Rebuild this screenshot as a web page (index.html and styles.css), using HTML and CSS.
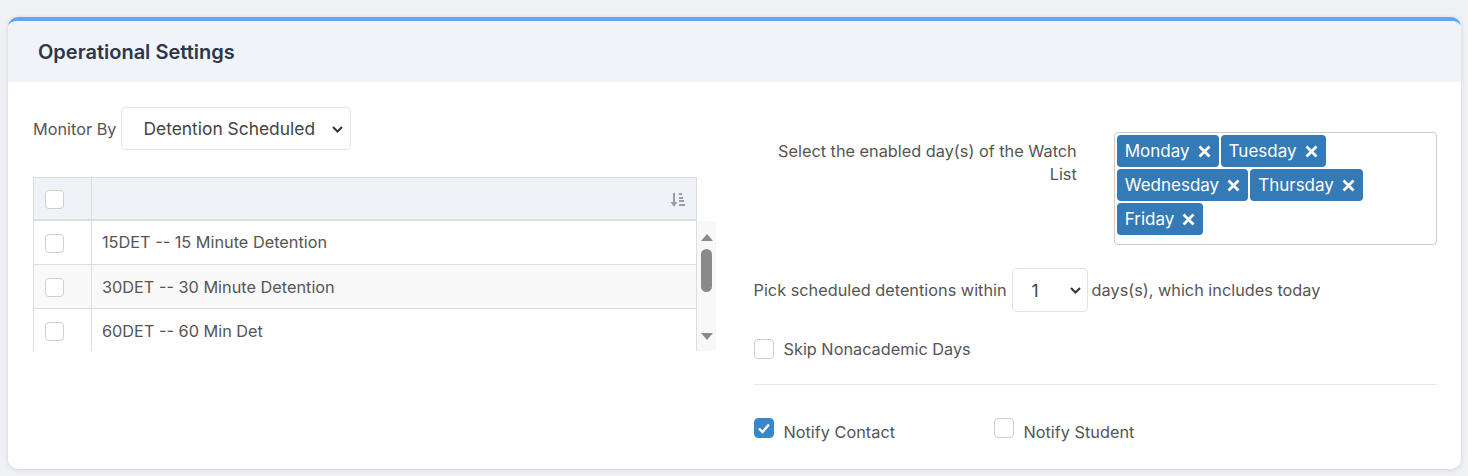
FILE: index.html
```html
<!DOCTYPE html>
<html lang="en">
<head>
    <meta charset="UTF-8">
    <meta name="viewport" content="width=device-width, initial-scale=1.0">
    <title>Watch List - Operational Settings</title>
    <link rel="stylesheet" href="styles.css">
</head>
<body>
    <div class="page">
        <section class="card">
            <header class="card-head">
                <h2>Operational Settings</h2>
            </header>

            <div class="card-body">
                <div class="col-left">
                    <div class="monitor-row">
                        <label for="monitorBy">Monitor By</label>
                        <div class="select-wrap select-wide">
                            <select id="monitorBy">
                                <option>Detention Scheduled</option>
                                <option>Detention Served</option>
                            </select>
                            <svg class="chevron" width="11" height="7" viewBox="0 0 11 7"><path d="M1 1l4.5 4.5L10 1" fill="none" stroke="#333" stroke-width="2"/></svg>
                        </div>
                    </div>

                    <div class="grid">
                        <div class="grid-top">
                            <table class="grid-head">
                                <tr>
                                    <th class="cell-check"><span class="box"></span></th>
                                    <th class="cell-sort">
                                        <svg width="16" height="16" viewBox="0 0 16 16" fill="#9a9fa6">
                                            <rect x="3" y="1" width="2" height="10"/>
                                            <path d="M0.5 10h7L4 15z"/>
                                            <rect x="9" y="1" width="3" height="2"/>
                                            <rect x="9" y="5" width="4" height="2"/>
                                            <rect x="9" y="8" width="5" height="2"/>
                                            <rect x="9" y="12" width="6" height="2"/>
                                        </svg>
                                    </th>
                                </tr>
                            </table>
                        </div>
                        <div class="grid-body">
                            <div class="grid-scroll">
                                <table class="grid-rows">
                                    <tr><td class="cell-check"><span class="box"></span></td><td>15DET -- 15 Minute Detention</td></tr>
                                    <tr class="odd"><td class="cell-check"><span class="box"></span></td><td>30DET -- 30 Minute Detention</td></tr>
                                    <tr><td class="cell-check"><span class="box"></span></td><td>60DET -- 60 Min Det</td></tr>
                                </table>
                            </div>
                            <div class="scrollbar">
                                <span class="scroll-up"></span>
                                <span class="scroll-thumb"></span>
                                <span class="scroll-down"></span>
                            </div>
                        </div>
                    </div>
                </div>

                <div class="col-right">
                    <div class="days-row">
                        <label class="days-label">Select the enabled day(s) of the Watch List</label>
                        <div class="tag-box">
                            <span class="tag">Monday <svg width="13" height="13" viewBox="0 0 13 13"><path d="M1.5 1.5l10 10M11.5 1.5l-10 10" stroke="#fff" stroke-width="2.8"/></svg></span>
                            <span class="tag">Tuesday <svg width="13" height="13" viewBox="0 0 13 13"><path d="M1.5 1.5l10 10M11.5 1.5l-10 10" stroke="#fff" stroke-width="2.8"/></svg></span>
                            <span class="tag">Wednesday <svg width="13" height="13" viewBox="0 0 13 13"><path d="M1.5 1.5l10 10M11.5 1.5l-10 10" stroke="#fff" stroke-width="2.8"/></svg></span>
                            <span class="tag">Thursday <svg width="13" height="13" viewBox="0 0 13 13"><path d="M1.5 1.5l10 10M11.5 1.5l-10 10" stroke="#fff" stroke-width="2.8"/></svg></span>
                            <span class="tag">Friday <svg width="13" height="13" viewBox="0 0 13 13"><path d="M1.5 1.5l10 10M11.5 1.5l-10 10" stroke="#fff" stroke-width="2.8"/></svg></span>
                        </div>
                    </div>

                    <div class="pick-row">
                        <span>Pick scheduled detentions within</span>
                        <div class="select-wrap select-small">
                            <select>
                                <option>1</option>
                                <option>2</option>
                                <option>3</option>
                            </select>
                            <svg class="chevron" width="11" height="7" viewBox="0 0 11 7"><path d="M1 1l4.5 4.5L10 1" fill="none" stroke="#333" stroke-width="2"/></svg>
                        </div>
                        <span>days(s), which includes today</span>
                    </div>

                    <div class="check-row">
                        <span class="box box-lg"></span>
                        <span>Skip Nonacademic Days</span>
                    </div>

                    <hr class="divider">

                    <div class="notify-row">
                        <div class="notify-item">
                            <span class="box box-lg checked"><svg width="14" height="12" viewBox="0 0 14 12"><path d="M2 6.5l3.5 3.5L12 2.5" fill="none" stroke="#fff" stroke-width="2.4"/></svg></span>
                            <span class="notify-text">Notify Contact</span>
                        </div>
                        <div class="notify-item">
                            <span class="box box-lg"></span>
                            <span class="notify-text">Notify Student</span>
                        </div>
                    </div>
                </div>
            </div>
        </section>
    </div>
</body>
</html>
```

FILE: styles.css
```css
body {
    margin: 0;
    background-color: #eff1f5;
    font-family: Inter, "Noto Sans", sans-serif;
    font-size: 16.3px;
    color: #555;
}
.page {
    padding: 17px 7px 6px 8px;
}
.card {
    background-color: #fff;
    border-top: 4px solid #60a5fa;
    border-radius: 10px;
    box-shadow: 0 1px 5px rgba(0,0,0,0.12);
    overflow: hidden;
}
.card-head {
    background-color: #f0f4f9;
    height: 61px;
    padding: 0 30px;
    display: flex;
    align-items: center;
}
.card-head h2 {
    margin: 0;
    font-size: 20px;
    font-weight: 600;
    color: #2d3748;
}
.card-body {
    display: grid;
    grid-template-columns: 1fr 1fr;
    column-gap: 37px;
    padding: 25px 24px 27px 25px;
}

/* left column */
.monitor-row {
    display: flex;
    align-items: center;
    gap: 5px;
}
.select-wrap {
    position: relative;
}
.select-wrap select {
    appearance: none;
    -webkit-appearance: none;
    display: block;
    background-color: #fff;
    border: 1px solid #e3e3e3;
    border-radius: 5px;
    font-family: Inter, "Noto Sans", sans-serif;
    font-size: 17.4px;
    color: #444;
    outline: none;
}
.select-wide select {
    width: 230px;
    height: 43px;
    padding: 0 30px 0 21px;
}
.select-small select {
    width: 76px;
    height: 44px;
    padding: 0 24px 0 19px;
}
.chevron {
    position: absolute;
    top: 50%;
    margin-top: -3px;
    pointer-events: none;
}
.select-wide .chevron {
    right: 8px;
}
.select-small .chevron {
    right: 7px;
}
.grid {
    margin-top: 27px;
    width: 683px;
}
.grid table {
    border-collapse: collapse;
    table-layout: fixed;
}
.grid th,
.grid td {
    box-sizing: border-box;
}
.grid-top {
    padding-right: 19px;
}
.grid-head {
    width: 100%;
    background-color: #eff3f8;
    border: 1px solid #ddd;
    border-bottom: 2px solid #ddd;
}
.grid-head th {
    height: 42px;
    padding: 0;
}
.grid .cell-check {
    width: 58px;
    border-right: 1px solid #ddd;
    padding: 0 0 0 11px;
    text-align: left;
}
.grid .cell-sort {
    text-align: right;
    padding-right: 10px;
}
.cell-sort svg {
    display: inline-block;
    vertical-align: middle;
}
.grid-body {
    display: flex;
    height: 130px;
}
.grid-scroll {
    flex: 1;
    overflow: hidden;
}
.grid-rows {
    width: 100%;
    border-left: 1px solid #ddd;
    border-right: 1px solid #ddd;
}
.grid-rows td {
    height: 44px;
    padding: 0 10px;
    border-bottom: 1px solid #ddd;
    color: #555;
}
.grid-rows tr.odd td {
    background-color: #f9f9f9;
}
.scrollbar {
    width: 19px;
    background-color: #f8f8f8;
    display: flex;
    flex-direction: column;
    align-items: center;
}
.scroll-up {
    margin-top: 13px;
    border-left: 6.5px solid transparent;
    border-right: 6.5px solid transparent;
    border-bottom: 7px solid #8a8a8a;
}
.scroll-thumb {
    margin-top: 8px;
    width: 11px;
    height: 43px;
    border-radius: 6px;
    background-color: #8a8a8a;
}
.scroll-down {
    margin-top: auto;
    margin-bottom: 11px;
    border-left: 6.5px solid transparent;
    border-right: 6.5px solid transparent;
    border-top: 7px solid #8a8a8a;
}

/* checkboxes */
.box {
    display: inline-flex;
    align-items: center;
    justify-content: center;
    box-sizing: border-box;
    width: 19px;
    height: 19px;
    border: 1px solid #cfcfcf;
    border-radius: 4px;
    background-color: #fff;
    vertical-align: middle;
    flex: none;
}
.box-lg {
    width: 20px;
    height: 20px;
}
.box.checked {
    background-color: #3a86cc;
    border-color: #3a86cc;
}

/* right column */
.col-right {
    padding-top: 25px;
}
.days-row {
    display: grid;
    grid-template-columns: 1fr 1fr;
    column-gap: 37px;
}
.days-label {
    text-align: right;
    padding-top: 8px;
    line-height: 23px;
}
.tag-box {
    box-sizing: border-box;
    height: 113px;
    padding: 2px;
    border: 1px solid #ccc;
    border-radius: 4px;
    display: flex;
    flex-wrap: wrap;
    align-content: flex-start;
    gap: 2px;
}
.tag {
    display: inline-flex;
    align-items: center;
    gap: 8px;
    height: 32px;
    padding: 0 8px;
    background-color: #337ab7;
    color: #fff;
    font-size: 17px;
    border-radius: 4px;
}
.pick-row {
    margin-top: 23px;
    display: flex;
    align-items: center;
    gap: 5px;
}
.pick-row .select-wrap {
    margin-right: -1px;
}
.check-row {
    margin-top: 27px;
    display: flex;
    align-items: center;
    gap: 10px;
}
.divider {
    margin: 25px 0 0;
    border: none;
    border-top: 1px solid #e8e8e8;
}
.notify-row {
    margin-top: 33px;
    display: grid;
    grid-template-columns: 240px auto;
}
.notify-item {
    display: flex;
    align-items: flex-start;
    gap: 10px;
}
.notify-text {
    margin-top: 4px;
    line-height: 20px;
}
```
